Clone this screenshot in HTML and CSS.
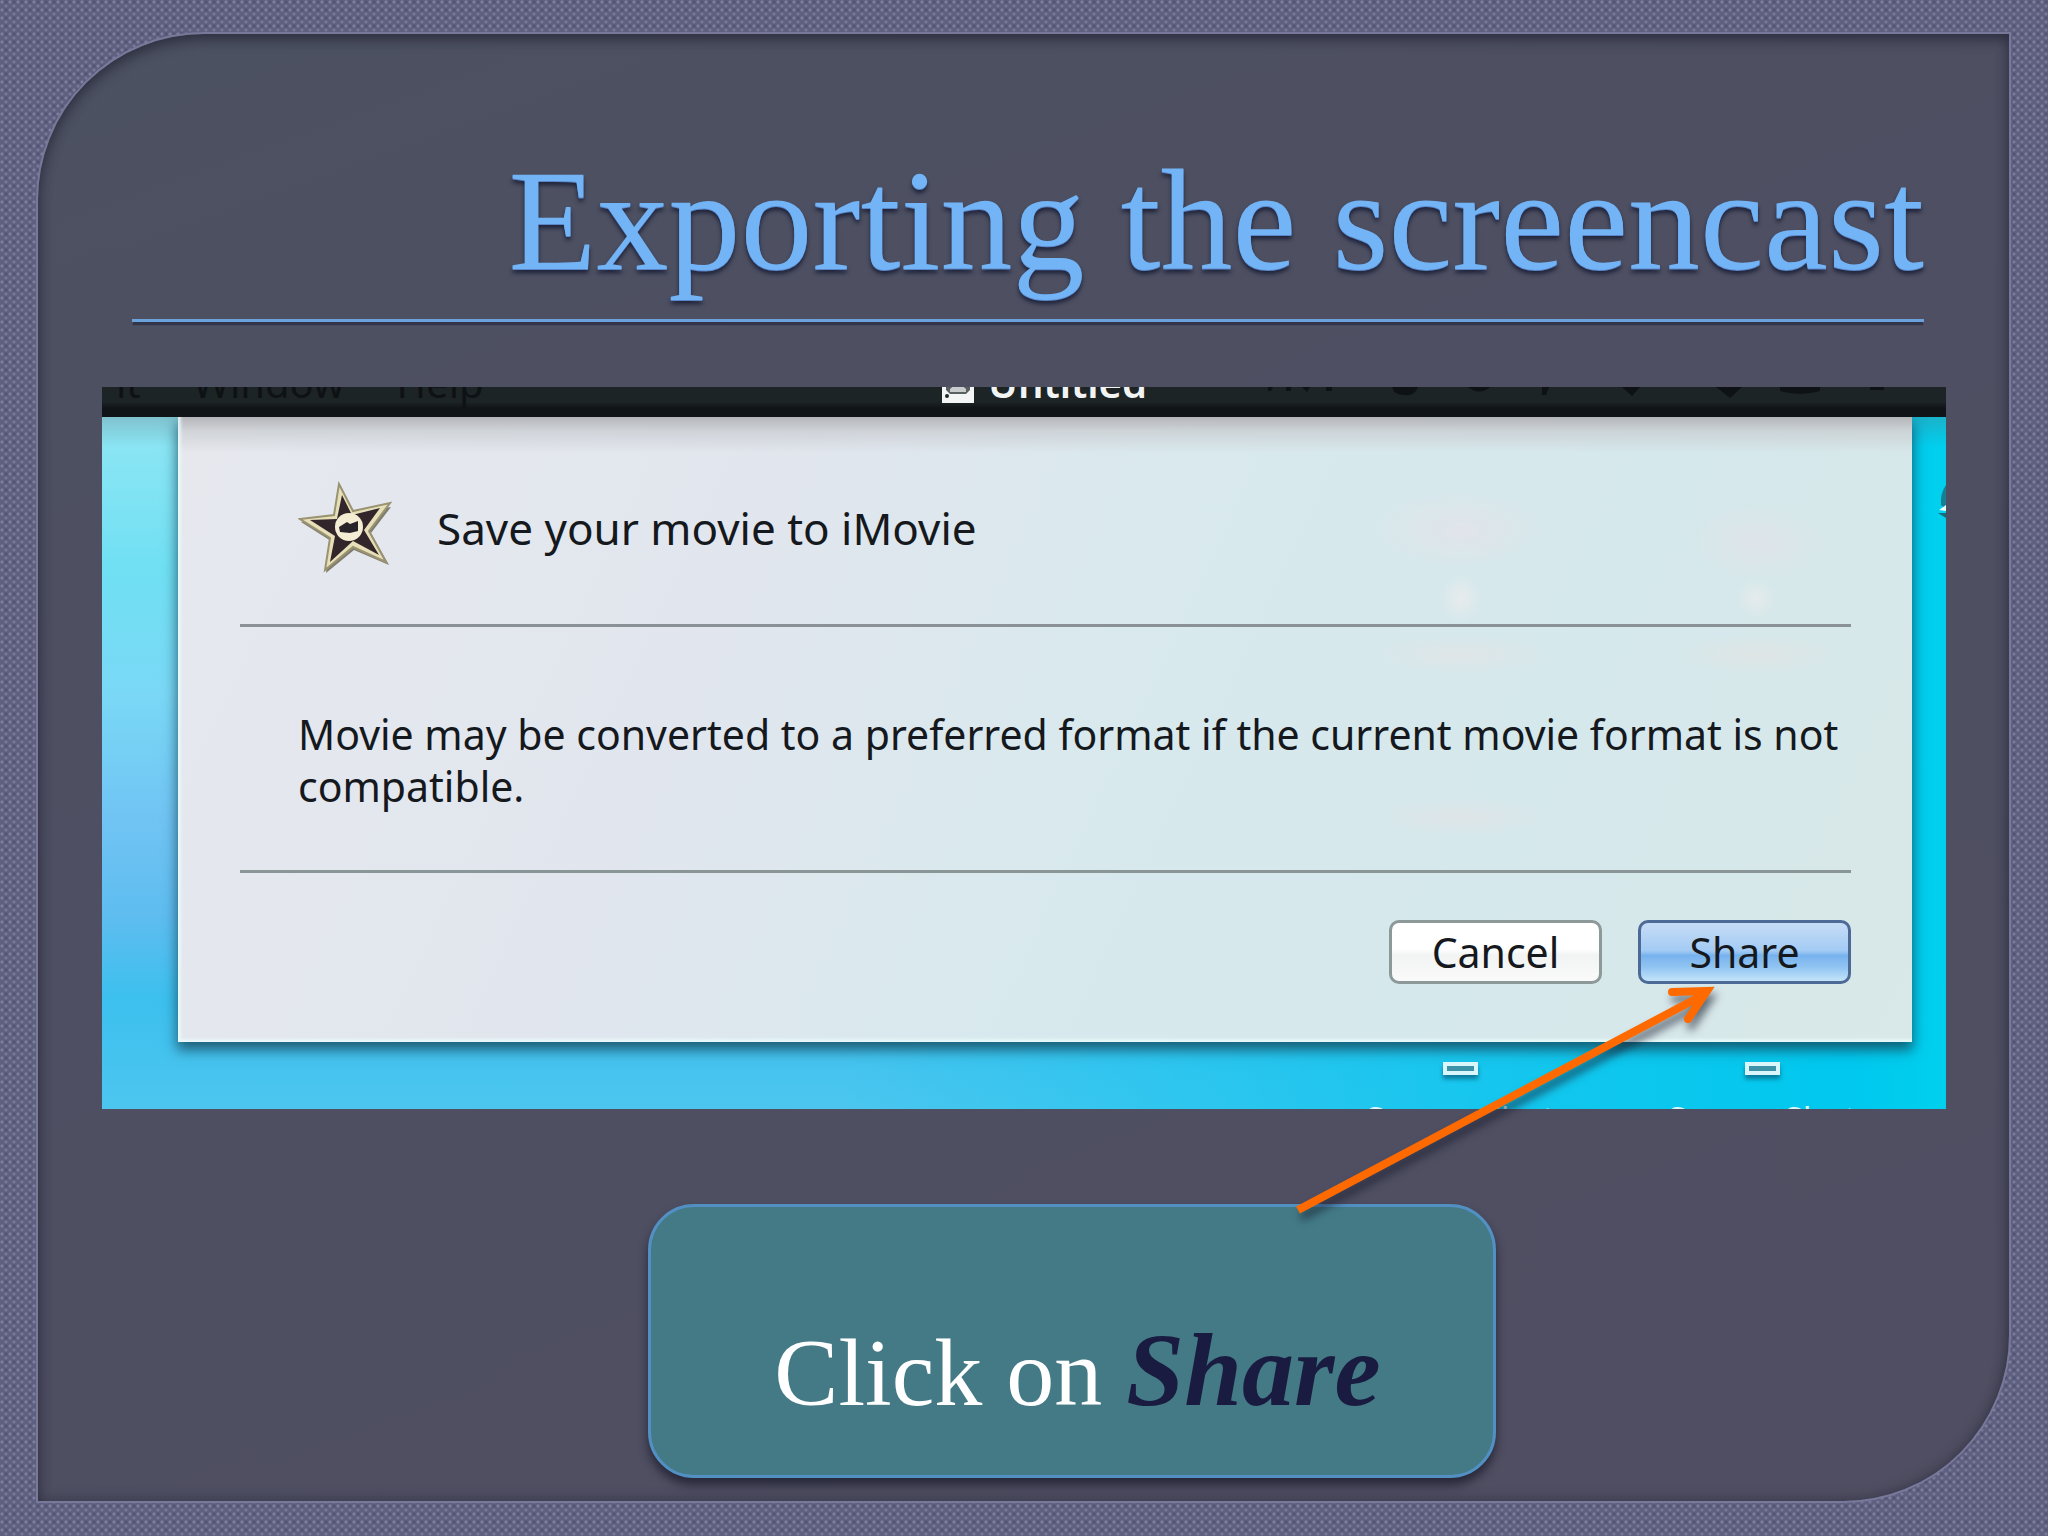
FILE: index.html
```html
<!DOCTYPE html>
<html lang="en">
<head>
<meta charset="utf-8">
<meta name="viewport" content="width=device-width, initial-scale=1">
<title>Exporting the screencast</title>
<link rel="stylesheet" href="styles.css">
</head>
<body>
<main class="slide">
  <header class="slide-header">
    <h1 class="slide-title">Exporting the screencast</h1>
  </header>

  <section class="desktop" aria-label="Save to iMovie">
    <div class="menubar">
      <div class="menus"><span>it</span><span>Window</span><span>Help</span></div>
      <div class="window-title">
        <svg class="doc-icon" viewBox="0 0 32 30" aria-hidden="true">
          <rect width="32" height="30" fill="#f3f5f5"/>
          <path d="M4 0h24v17l-4 4H8l-4-4z" fill="#596062"/>
          <path d="M8 16q8-8 16 0v3H8z" fill="#c9cccc"/>
          <circle cx="5" cy="23" r="2" fill="#20272a"/>
        </svg>
        <span>Untitled</span>
      </div>
      <svg class="status" viewBox="0 0 620 10" preserveAspectRatio="xMinYMin" aria-hidden="true">
        <g fill="#0e1214">
          <path d="M0 0h5l-2 4h-3zM18 0h5v4h-5zM34 0h8l-3 5zM58 0h6v4h-6z"/>
          <path d="M124 0h26q-4 10-14 8q-10 0-12-8zM200 0h22q-10 9-22 0zM274 0h7l-3 8h-4zM354 0h18l-8 9zM448 0h26l-12 11zM512 0h40v4q-20 6-40 0zM602 0h14v3h-14z"/>
        </g>
      </svg>
    </div>

    <div class="wallpaper">
      <form class="sheet" onsubmit="return false">
        <div class="sheet-head">
          <svg class="star" viewBox="0 0 96 92" aria-hidden="true">
            <path d="M42 7 56 32 93 26 73 52 91 84 56 69 28 92 33 60 3 41 37 36z" fill="#5d5a45" opacity=".75"/>
            <path d="M41 3 55 30 92 22 71 50 88 81 55 66 27 89 32 57 2 38 36 34z" fill="#e6dfb8" stroke="#9a9372" stroke-width="2"/>
            <path d="M44 14 54 34 82 27 66 49 81 74 55 60 32 81 37 55 12 39 39 38z" fill="#33262a"/>
            <circle cx="51" cy="46" r="14" fill="#f5ecd4"/>
            <path d="M41 46l8-5 3 2 8-3v10l-8 2-10-1z" fill="#28242a"/>
          </svg>
          <h2 class="sheet-title">Save your movie to iMovie</h2>
        </div>
        <p class="sheet-text">Movie may be converted to a preferred format if the current movie format is not compatible.</p>
        <div class="sheet-actions">
          <button type="button" class="btn">Cancel</button>
          <button type="submit" class="btn btn-primary">Share</button>
        </div>
      </form>
      <div class="files">
        <div class="file"><span class="file-icon"></span><span class="file-name">Screen Shot</span></div>
        <div class="file"><span class="file-icon"></span><span class="file-name">Screen Shot</span></div>
      </div>
      <svg class="edge-item" viewBox="0 0 10 34" aria-hidden="true">
        <path d="M10 0Q4 8 5 20L10 24z" fill="#167f94"/>
        <path d="M3 25l7-5v6z" fill="#e6ffff"/>
        <path d="M2 28h8v5z" fill="#146c7c"/>
      </svg>
    </div>
  </section>

  <div class="callout-row">
    <div class="callout">
      <p class="callout-text">Click on <em class="callout-key">Share</em></p>
      <svg class="arrow" viewBox="0 0 440 250" aria-hidden="true">
        <path d="M11 230 418 14M385 12 420 11 401 39" fill="none" stroke="#ff6a00" stroke-width="8"/>
        <circle cx="385" cy="12" r="4" fill="#ff6a00"/>
        <circle cx="401" cy="39" r="4" fill="#ff6a00"/>
      </svg>
    </div>
  </div>
</main>
</body>
</html>
```
FILE: styles.css
```css
* {
  box-sizing: border-box;
}

body {
  margin: 0;
  min-height: 100vh;
  padding: 32px 37px 33px 36px;
  display: flex;
  background-color: #5f6080;
  background-image:
    radial-gradient(circle at 2px 2px, #7f80a0 0 1px, transparent 2px),
    radial-gradient(circle at 6px 6px, #787998 0 1px, transparent 2px),
    radial-gradient(circle at 6px 2px, #525372 0 1px, transparent 2px);
  background-size: 8px 8px;
}

.slide {
  flex: 1;
  min-width: 0;
  display: flex;
  flex-direction: column;
  border: 2px solid #77789a;
  border-radius: 168px 0;
  background: linear-gradient(160deg, #4c5161 0%, #4e4f62 40%, #504e62 100%);
  box-shadow: inset 0 6px 12px rgba(30, 32, 48, 0.5), inset 0 0 14px rgba(30, 32, 48, 0.4);
}

.slide-header {
  margin: 0 85px 0 94px;
  padding: 107px 0 18px;
  border-bottom: 3px solid #6ba2dc;
  box-shadow: 0 4px 1px -1px rgba(38, 42, 62, 0.7);
}

.slide-title {
  margin: 0;
  font: 400 144px/160px "Palatino Linotype", Palatino, "Liberation Serif", serif;
  text-align: right;
  white-space: nowrap;
  color: #72b4f6;
  text-shadow: 0 1px 0 #5b86c8, 0 4px 4px rgba(22, 28, 52, 0.9);
}

.desktop {
  margin: 65px 63px 0 64px;
  overflow: hidden;
  font-family: "Lucida Grande", "Noto Sans", sans-serif;
  color: #15191d;
}

.menubar {
  height: 30px;
  overflow: hidden;
  display: grid;
  grid-template-columns: 840px 326px 1fr;
  align-items: start;
  background: linear-gradient(#1d2426 0 50%, #101416 70% 100%);
}

.menus,
.window-title {
  height: 16px;
  display: flex;
  align-items: flex-end;
  font-size: 40px;
  line-height: 40px;
}

.menus {
  gap: 52px;
  padding-left: 14px;
  color: #0e1214;
}

.window-title {
  gap: 14px;
  font-weight: 600;
  color: #f2f4f4;
}

.doc-icon {
  width: 32px;
  height: 30px;
  flex: none;
}

.status {
  width: 620px;
  height: 12px;
}

.wallpaper {
  position: relative;
  height: 692px;
  padding: 0 34px 0 76px;
  overflow: hidden;
  background:
    linear-gradient(rgba(90, 110, 120, 0.3), transparent 30px),
    linear-gradient(90deg, transparent 0 40%, #16c6ee 75%, #00c8ee 95%, #00d0ee),
    linear-gradient(#90e6f4, #70e0f3 22%, #7ad8f6 40%, #70c4f3 58%, #5fbdf0 72%, #3cc0ee 84%, #4cc6ef 100%);
}

.sheet {
  min-height: 625px;
  padding: 0 61px 0 62px;
  background:
    linear-gradient(#b4b5b9 0, rgba(200, 203, 207, 0.7) 14px, transparent 36px),
    radial-gradient(90px 40px at 74% 18%, rgba(232, 226, 232, 0.6), transparent),
    radial-gradient(70px 40px at 91% 20%, rgba(232, 226, 232, 0.5), transparent),
    radial-gradient(90px 20px at 74% 38%, rgba(230, 228, 228, 0.6), transparent),
    radial-gradient(80px 20px at 91% 38%, rgba(230, 228, 226, 0.6), transparent),
    radial-gradient(90px 20px at 74% 64%, rgba(228, 226, 228, 0.6), transparent),
    radial-gradient(20px 24px at 74% 29%, rgba(236, 236, 236, 0.8), transparent),
    radial-gradient(20px 20px at 91% 29%, rgba(236, 236, 236, 0.7), transparent),
    linear-gradient(115deg, #e6e8ee 0, #e1e6ee 32%, #d9e9ed 50%, #d5e8ec 75%, #d9e8e8 100%);
  box-shadow: inset 3px -3px 3px rgba(235, 252, 252, 0.8), 0 7px 12px 1px rgba(20, 70, 90, 0.8);
}

.sheet-head {
  height: 210px;
  padding: 64px 58px 0;
  display: flex;
  align-items: flex-start;
  gap: 43px;
  border-bottom: 3px solid #8a9298;
}

.star {
  width: 96px;
  height: 92px;
  flex: none;
}

.sheet-title {
  margin: 19px 0 0;
  font-size: 44px;
  font-weight: 400;
  line-height: 56px;
  white-space: nowrap;
}

.sheet-text {
  min-height: 246px;
  margin: 0 -20px 0 0;
  padding: 81px 0 0 58px;
  font-size: 41px;
  line-height: 52px;
}

.sheet-actions {
  display: flex;
  justify-content: flex-end;
  gap: 36px;
  padding-top: 47px;
  border-top: 3px solid #8a9598;
  margin-top: -3px;
}

.btn {
  width: 213px;
  height: 64px;
  padding: 0;
  border: 3px solid #8d9899;
  border-radius: 10px;
  font: 400 41px/56px "Lucida Grande", "Noto Sans", sans-serif;
  color: #15191d;
  background: linear-gradient(#fff 0 45%, #f2f3f3 55%, #fafafa 100%);
}

.btn-primary {
  border-color: #4d6a96;
  background: linear-gradient(#c6dcf6 0, #a3cbf4 48%, #78b2ee 56%, #90c4f2 76%, #c3e4f8 100%);
}

.files {
  display: flex;
  justify-content: flex-end;
  gap: 102px;
  padding: 20px 50px 0 0;
}

.file {
  width: 200px;
  display: flex;
  flex-direction: column;
  align-items: center;
  gap: 24px;
}

.file-icon {
  width: 35px;
  height: 13px;
  border: 4px solid #d8f6fb;
  background: #3d93a8;
  box-shadow: 0 4px 4px rgba(10, 90, 120, 0.7);
}

.file-name {
  font-size: 34px;
  line-height: 40px;
  white-space: nowrap;
  color: #d8f8fd;
}

.edge-item {
  position: absolute;
  right: 0;
  top: 68px;
  width: 10px;
  height: 34px;
}

.callout-row {
  display: flex;
  justify-content: center;
  padding: 95px 0 22px 96px;
}

.callout {
  position: relative;
  width: 848px;
  padding: 103px 32px 42px 44px;
  border: 3px solid #5290c4;
  border-radius: 46px;
  background: #437a86;
  box-shadow: 0 7px 10px rgba(25, 27, 42, 0.75);
}

.callout-text {
  margin: 0;
  font: 400 96px/120px "Palatino Linotype", Palatino, "Liberation Serif", serif;
  text-align: center;
  white-space: nowrap;
  color: #fff;
}

.callout-key {
  font-size: 104px;
  font-weight: 700;
  line-height: 120px;
  color: #191c40;
}

.arrow {
  position: absolute;
  left: 636px;
  top: -227px;
  width: 440px;
  height: 250px;
  filter: drop-shadow(3px 7px 4px rgba(20, 24, 40, 0.6));
}
```
